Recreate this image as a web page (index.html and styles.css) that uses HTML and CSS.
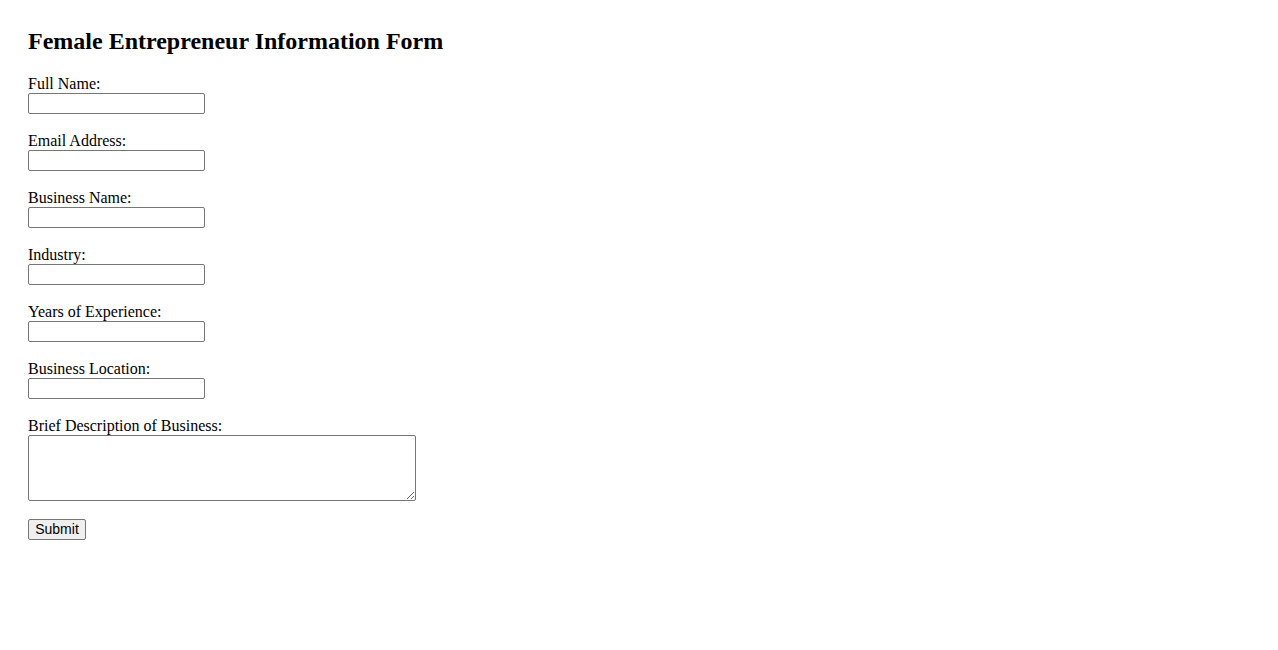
FILE: index.html
```html
<!DOCTYPE html>
<html>
<head>
<meta charset="utf-8">
<title>Female Entrepreneur Information Form</title>
<link rel="stylesheet" href="styles.css">
</head>
<body>
<h2 class="title">Female Entrepreneur Information Form</h2>
<form class="form">
<label for="name">Full Name:</label><br>
<input class="field" type="text" id="name"><br><br>
<label for="email">Email Address:</label><br>
<input class="field" type="email" id="email"><br><br>
<label for="business">Business Name:</label><br>
<input class="field" type="text" id="business"><br><br>
<label for="industry">Industry:</label><br>
<input class="field" type="text" id="industry"><br><br>
<label for="years">Years of Experience:</label><br>
<input class="field" type="text" id="years"><br><br>
<label for="location">Business Location:</label><br>
<input class="field" type="text" id="location"><br><br>
<label for="desc">Brief Description of Business:</label><br>
<textarea class="area" id="desc" rows="4" cols="50"></textarea><br><br>
<input class="submit" type="submit" value="Submit">
</form>
</body>
</html>
```
FILE: styles.css
```css
body {
  margin: 28px;
  font-family: "Liberation Serif", "Times New Roman", serif;
  font-size: 16px;
  color: #000;
  background: #fff;
}
.title {
  font-size: 24px;
  font-weight: bold;
  margin: 0 0 19.92px;
}
.form {
  margin: 0;
}
.field {
  box-sizing: border-box;
  width: 177px;
  height: 21px;
  border: 1px solid #767676;
  border-radius: 2px;
  padding: 1px 2px;
  margin: 0;
  font-family: "Liberation Sans", Arial, sans-serif;
  font-size: 13.33px;
}
.area {
  box-sizing: border-box;
  width: 388px;
  height: 66px;
  border: 1px solid #767676;
  border-radius: 2px;
  padding: 2px;
  margin: 0;
  font-family: "Liberation Mono", monospace;
  font-size: 13.33px;
  vertical-align: bottom;
}
.submit {
  box-sizing: border-box;
  width: 58px;
  height: 21px;
  padding: 1px 0;
  border: 1px solid #767676;
  border-radius: 2px;
  background: #efefef;
  margin: 0;
  font-family: "Liberation Sans", Arial, sans-serif;
  font-size: 14px;
  color: #000;
}
```
